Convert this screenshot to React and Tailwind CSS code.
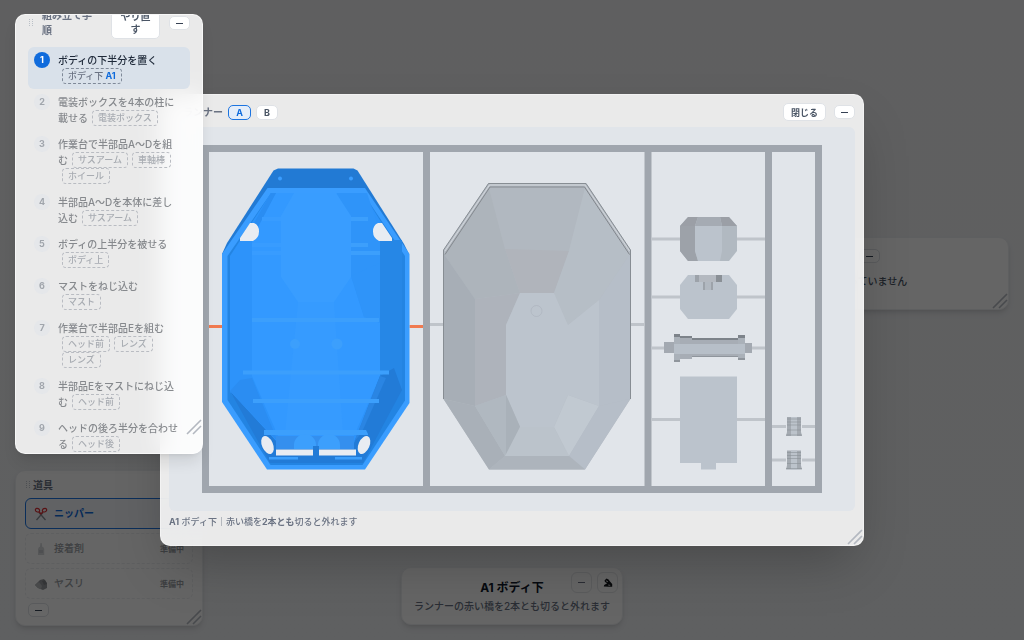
import clsx from "clsx";

const STEPS = [
  { text: "ボディの下半分を置く", parts: ["ボディ下"], code: "A1" },
  { text: "電装ボックスを4本の柱に載せる", parts: ["電装ボックス"] },
  { text: "作業台で半部品A〜Dを組む", parts: ["サスアーム", "車軸棒", "ホイール"] },
  { text: "半部品A〜Dを本体に差し込む", parts: ["サスアーム"] },
  { text: "ボディの上半分を被せる", parts: ["ボディ上"] },
  { text: "マストをねじ込む", parts: ["マスト"] },
  { text: "作業台で半部品Eを組む", parts: ["ヘッド前", "レンズ", "レンズ"] },
  { text: "半部品Eをマストにねじ込む", parts: ["ヘッド前"] },
  { text: "ヘッドの後ろ半分を合わせる", parts: ["ヘッド後"] },
];

const Grip = () => (
  <svg width="6" height="8" viewBox="0 0 6 8" fill="#9aa3af" className="shrink-0 opacity-60">
    {[0, 2, 4, 6].map((y) => (
      <g key={y}>
        <rect x="1" y={y} width="1" height="1" />
        <rect x="4" y={y} width="1" height="1" />
      </g>
    ))}
  </svg>
);

const ResizeHandle = ({ className }) => (
  <svg
    width="16"
    height="16"
    viewBox="0 0 16 16"
    stroke="#b3b8c0"
    strokeWidth="1.6"
    className={clsx("absolute", className)}
  >
    <path d="M1 15 15 1M7 15l8-8" />
  </svg>
);

const MinButton = ({ className }) => (
  <button
    type="button"
    aria-label="最小化"
    className={clsx(
      "flex h-3.5 w-[21px] shrink-0 items-center justify-center rounded-[5px] border border-[#dfe2e6] bg-white",
      className,
    )}
  >
    <span className="h-px w-[7px] bg-gray-700" />
  </button>
);

const StepItem = ({ step, index }) => {
  const current = index === 0;
  return (
    <li
      className={clsx(
        "flex gap-2 rounded-md pt-[5px] pr-2.5 pb-[5px] pl-1.5",
        current && "bg-[#d9e1ea]",
      )}
    >
      <span
        className={clsx(
          "flex h-4 w-4 shrink-0 items-center justify-center rounded-full text-[9px] font-bold",
          current ? "bg-[#0f6bdc] text-white" : "bg-[#e1e5ea]/60 text-[#a0a5ac]",
        )}
      >
        {index + 1}
      </span>
      <p
        className={clsx(
          "min-w-0 flex-1 text-[10px] leading-4 font-medium break-all",
          current ? "text-gray-800" : "text-[#86898d]",
        )}
      >
        {step.text}
        {step.parts.map((part, i) => (
          <span
            key={i}
            className={clsx(
              "ml-1 inline-block h-4 rounded border border-dashed px-[5px] align-top text-[9px] leading-[14px] whitespace-nowrap",
              current ? "border-[#7f8998] text-gray-500" : "border-[#b9bcc2] text-[#a8acb2]",
            )}
          >
            {part}
            {step.code && <b className="ml-0.5 text-[#0f6bdc]">{step.code}</b>}
          </span>
        ))}
      </p>
    </li>
  );
};

const StepsPanel = () => (
  <section className="absolute top-3.5 left-[15px] h-[440px] w-[188px] overflow-hidden rounded-[10px] border border-white/60 bg-white/87 px-3 shadow-lg backdrop-blur-md">
    <header className="-mt-2 mb-2 flex items-center">
      <Grip />
      <h2 className="ml-2 w-[51px] text-[10px] leading-[15px] font-bold text-gray-500">
        組み立て手順
      </h2>
      <button
        type="button"
        className="ml-[18px] h-8 w-[49px] rounded-[5px] border border-[#dfe2e6] bg-white px-2 text-[10px] leading-[13px] font-bold text-gray-600"
      >
        やり直す
      </button>
      <MinButton className="ml-auto" />
    </header>
    <ol>
      {STEPS.map((step, i) => (
        <StepItem key={i} step={step} index={i} />
      ))}
    </ol>
    <ResizeHandle className="right-0 bottom-[18px]" />
  </section>
);

const ScissorsIcon = () => (
  <svg width="14" height="14" viewBox="0 0 14 14" fill="none">
    <path d="M5 5.500 11.500 13M9 5.500 2.500 13" stroke="#8b9199" strokeWidth="1.3" />
    <ellipse cx="3.500" cy="3.200" rx="2.200" ry="1.700" transform="rotate(25 3.500 3.200)" stroke="#dc2f35" strokeWidth="1.200" />
    <ellipse cx="10.500" cy="3.200" rx="2.200" ry="1.700" transform="rotate(-25 10.500 3.200)" stroke="#dc2f35" strokeWidth="1.200" />
    <path d="M5 4.600 7 7l2-2.400" stroke="#dc2f35" strokeWidth="1.200" />
  </svg>
);

const GlueIcon = () => (
  <svg width="14" height="14" viewBox="0 0 14 14" fill="#d5d7da">
    <path d="M6.500 1h1.200l.6 4H5.900zM5 5h4.200l1 2v6H4V7z" />
    <path d="M5 8h4v3H5z" fill="#c3c6ca" />
  </svg>
);

const FileIcon = () => (
  <svg width="14" height="14" viewBox="0 0 14 14">
    <path d="M1 8 6 3l4-1 3 4v5l-4 2-5-2z" fill="#97999d" />
    <path d="m1 8 4-3 3 4-1 3-3-1z" fill="#b3b6ba" />
    <path d="m8 4 3-1 2 4-3 1z" fill="#808387" />
  </svg>
);

const TOOLS = [
  { name: "ニッパー", icon: <ScissorsIcon />, ready: true },
  { name: "接着剤", icon: <GlueIcon /> },
  { name: "ヤスリ", icon: <FileIcon /> },
];

const ToolsPanel = () => (
  <section className="absolute top-[470px] left-[15px] w-[188px] rounded-[10px] border border-[#eceef1] bg-[#fcfcfc] px-[9px] pt-[7px] pb-2 shadow-md">
    <header className="mb-1.5 flex items-center gap-0.5">
      <Grip />
      <h2 className="text-[10px] leading-[14px] font-bold text-gray-500">道具</h2>
    </header>
    <div className="flex flex-col gap-1">
      {TOOLS.map((tool) => (
        <button
          key={tool.name}
          type="button"
          disabled={!tool.ready}
          className={clsx(
            "flex h-[31px] items-center rounded-md border px-2 text-left text-[10px]",
            tool.ready
              ? "border-[#1c74e0] bg-[#f3f6fb] font-bold text-[#0f6bdc]"
              : "border-dashed border-[#ebedf0] font-medium text-[#9a9ea4]",
          )}
        >
          {tool.icon}
          <span className="ml-1.5">{tool.name}</span>
          {!tool.ready && <span className="ml-auto text-[8px] font-bold">準備中</span>}
        </button>
      ))}
    </div>
    <MinButton className="mt-1 ml-[3px]" />
    <ResizeHandle className="right-0 bottom-0" />
  </section>
);

const HoldingPanel = () => (
  <section className="absolute top-[237px] right-[15px] h-[73px] w-[200px] rounded-[10px] border border-[#eceef1] bg-[#fcfcfc] px-2 pt-[11px] shadow-md">
    <MinButton className="ml-[41px]" />
    <p className="mt-2.5 text-[10px] leading-4 font-medium text-gray-600">何も持っていません</p>
    <ResizeHandle className="right-0 bottom-0" />
  </section>
);

const Toast = () => (
  <section className="absolute bottom-[15px] left-1/2 w-[222px] -translate-x-1/2 rounded-[10px] border border-[#eceef1] bg-[#fcfcfc] py-2.5 text-center shadow-md">
    <h2 className="text-xs leading-5 font-bold text-gray-900">A1 ボディ下</h2>
    <p className="text-[10px] leading-4 font-medium text-gray-500">
      ランナーの赤い橋を2本とも切ると外れます
    </p>
    <div className="absolute top-1 right-1 flex gap-[5px]">
      <button
        type="button"
        aria-label="最小化"
        className="flex h-[21px] w-[21px] items-center justify-center rounded-md border border-[#e3e5e8]"
      >
        <span className="h-px w-[7px] bg-gray-500" />
      </button>
      <button
        type="button"
        aria-label="切り離す"
        className="flex h-[21px] w-[21px] items-center justify-center rounded-md border border-[#e3e5e8]"
      >
        <svg width="10" height="10" viewBox="0 0 10 10" fill="#15181c">
          <path d="M1.500 2.500 3.500.6l2 .8L7 3.500 9.200 6v2.800H6L.8 8.600 1.200 7l3-1.800L2 4z" />
          <path d="m3 2.800 2 1M5.200 7l2 .4" stroke="#f4f5f6" strokeWidth=".8" />
        </svg>
      </button>
    </div>
  </section>
);

const LowerBody = () => (
  <g>
    <path d="M278 168.500h75.500l4 2L404 244l5 10v55H222v-55l5-11 46.500-72.500z" fill="#227ad4" />
    <path d="M267.500 188H365l44.500 66v149L365 469.500h-98L222 402V254z" fill="#3a9dff" />
    <path d="M271 193h92l42 63v144.500l-42.500 64.500h-92L227.500 400V256z" fill="#2384e2" />
    <path d="M271 193h92l38 61v137l-39 57h-90l-42-56V256z" fill="#2d93fa" />
    <path d="M380 240h22v150l-22-14zM363 193l11 24-11-6-8-18z" fill="#2687e6" />
    <path d="M252 240v-8l24-39h78l26 47v136l-26 60h-76l-26-60z" fill="#3399ff" />
    <path d="M271 193h5l-20 38-10 6z" fill="#2a8df2" />
    <path d="m337 193 30 0 13 39v90l-16-5-13-41z" fill="#2f94f9" />
    <path d="m351 276 13 41 16 6v-60z" fill="#2f94f9" />
    <path d="M294 193h42l15 23v61l-17 25h-36l-17-25v-61z" fill="#399dff" />
    <path d="M298 302h36l9 131h-58z" fill="#369bff" />
    <path d="M402 390 363 463h-93l-40-72 48 52h76l26-67 14-8z" fill="#227bd7" />
    <path d="m380 376 6 2-24 54-8 10z" fill="#2a85e3" />
    <path d="m230 391 10-11 12-2 26 64z" fill="#2b8df2" />
    <g fill="#3c9ffc">
      <path d="M351 217h17v4h-17zM351 243h17v4h-17zM351 251h29v4h-29z" />
      <path d="M262 217h19v4h-19zM252 243h29v4h-29zM252 251h29v4h-29z" fill="#389cff" />
      <path d="M252 318h127v4H252zM243 370.500h146v4H243zM253 399h126v4H253z" />
      <path d="M264 430h102l2 4v1H264zM269 457h29v2.500h-29zM335 457h27v2.500h-27z" />
      <circle cx="295" cy="344" r="5" />
      <circle cx="337" cy="344" r="5.500" />
      <path d="M276 436h78v13h-78z" fill="#348fee" />
      <path d="M294 445a11 11 0 0 1 22 0v4h-22zM318 445a11 11 0 0 1 22 0v4h-22z" />
    </g>
    <circle cx="280" cy="178.500" r="2" fill="#3a9dff" />
    <circle cx="351" cy="178.500" r="2" fill="#3a9dff" />
    <g fill="#e8ecf2">
      <path d="m240 238 10-15h4q5 2 5 8.500t-6 9.500h-13zM392 238l-10-15h-4q-5 2-5 8.500t6 9.500h13z" />
      <path d="M276 449.500h37v6h-37zM319 449.500h37v6h-37z" />
      <ellipse cx="267.500" cy="445" rx="5.500" ry="9.500" transform="rotate(-24 267.500 445)" />
      <ellipse cx="364" cy="445" rx="5.500" ry="9.500" transform="rotate(24 364 445)" />
    </g>
    <path d="M313 446h6v15h-6z" fill="#227bd7" />
  </g>
);

const UpperBody = () => (
  <g>
    <path d="M488.500 183H586l44.500 67v149L585 469.500h-96L443.500 399V250z" fill="#b4bbc3" />
    <path d="M489 188h96l-16 62-15 43h-34l-15-44z" fill="#b1b8c0" />
    <path d="M489 188 444 254l31 45 45-6-15-44z" fill="#adb4bb" />
    <path d="M444 254l31 45v107l-31-7z" fill="#a7aeb6" />
    <path d="m475 299 45-6-14 32v70l-31 11z" fill="#aeb3bb" />
    <path d="m505 249 64 2-15 42h-34z" fill="#b0b4bb" />
    <path d="m585 188 45 66-31 46-31 25-14-32 15-42z" fill="#b6bec6" />
    <path d="m630 254-31 46v106l31-7z" fill="#b6bec8" />
    <path d="M520 293h34l14 32 31-25v106l-31-11-14 32h-34l-14-32v-70z" fill="#bcc4cd" />
    <path d="m443.500 399 31.500 7 30 50-16 13.500z" fill="#a9b0b8" />
    <path d="m475 406 31-11 14 32-15 29z" fill="#b0b8c0" />
    <path d="M506 395v61l14-29z" fill="#a9b1b9" />
    <path d="M520 427h34l15 29h-64z" fill="#bbc3cb" />
    <path d="m554 427 14-32 31 11-30 50z" fill="#c1c9d1" />
    <path d="m599 406 31-7-45 70.500-16-13.500z" fill="#b6bec8" />
    <path d="M505 456h64l16 13.500h-96z" fill="#adb4bc" />
    <path d="M443.500 399V250l45-66.500H586l44.500 66.500v149" fill="none" stroke="#878d93" strokeWidth="1" />
    <path d="m445 251 44.500-66H585l44.500 66" fill="none" stroke="#d2d6db" strokeWidth="1" />
    <path d="m445 254.500 45-67.500h94.500l45 67.500" fill="none" stroke="#83888e" strokeWidth="1" />
    <circle cx="536.500" cy="311" r="5.500" fill="none" stroke="#adb5be" strokeWidth=".7" />
  </g>
);

const SmallParts = () => (
  <g>
    <path d="M688 217h41l8 9v25l-8 10h-41l-8-10v-25z" fill="#b1b9c1" />
    <path d="M688 217h41l8 9h-57z" fill="#9b9fa6" />
    <path d="M680 226h15v25l3 10h-10l-8-10z" fill="#9da2a9" />
    <path d="M698 217h22l2 9v25l-2 10h-22l-3-10v-25z" fill="#bbc3cc" />
    <path d="M698 217h22l2 9h-27z" fill="#a5abb3" />

    <path d="M688 275h41l8 10v24l-8 10h-41l-8-10v-24z" fill="#bbc3cc" />
    <path d="M695 275h27v7h-27z" fill="#b4b9c0" />
    <path d="M695 275h4v7h-4zM703 282h10v8h-10z" fill="#9da3aa" />
    <path d="M716 275h6v7h-6z" fill="#8a9096" />
    <path d="M705 282h6v8h-6z" fill="#b2b9c1" />

    <path d="M664 342h10v11h-10zM745 343h7v10h-7z" fill="#a3a9b1" />
    <path d="M674 334h6v28h-6zM738 336h7v24h-7z" fill="#aab1b9" />
    <path d="M680 336h12v23h-12zM692 338h46v19h-46z" fill="#a7adb5" />
    <path d="M674 334h6v3h-6zM680 336h12v2h-12zM692 338h46v2h-46zM738 335h7v3h-7z" fill="#7d838a" />
    <path d="M674 344h71v10h-71z" fill="#b7bfc8" />
    <path d="M692 356h46v1h-46zM674 360h6v2h-6zM738 358h7v2h-7z" fill="#8f959c" />

    <path d="M680 376.500h57V463h-21v6.500h-15V463h-21z" fill="#bbc3cc" />

    {[417, 450.5].map((y) => (
      <g key={y}>
        <path d={`M787 ${y}h14v15l1 4h-16l1-4z`} fill="#a4aab1" />
        <path d={`M791 ${y}h6v19h-6z`} fill="#bcc3cb" />
        <path
          d={`M787 ${y + 2}h14M787 ${y + 5}h14M787 ${y + 8}h14M787 ${y + 13}h14M786 ${y + 18}h16`}
          stroke="#8a9097"
          strokeWidth=".6"
        />
      </g>
    ))}
  </g>
);

const RunnerCanvas = () => (
  <svg viewBox="169 127 686 384" className="block w-full rounded-md bg-[#e1e5ea]">
    <path
      d="M205.500 148.500h613v341h-613zM426.500 148v341M648 148v341M768.500 148v341"
      fill="none"
      stroke="#a0a6ae"
      strokeWidth="7"
    />
    <path
      d="M430 324.500h14M630 324.500h14.500M651.500 239H680M737 239h28M651.500 297H680M737 297h28M651.500 348H665M752 348h13M651.500 419.500H680M737 419.500h28M772 426.500h14M802 426.500h13M772 460h14M802 460h13"
      stroke="#bfc4ca"
      strokeWidth="3"
    />
    <path d="M209 326.500h13M409.500 326.500H423" stroke="#f07a50" strokeWidth="3" />
    <LowerBody />
    <UpperBody />
    <SmallParts />
  </svg>
);

const RunnerWindow = () => (
  <section className="absolute top-[94px] right-40 left-40 rounded-[10px] border border-white/40 bg-white/87 px-2 pt-2 pb-[15px] shadow-2xl backdrop-blur-md">
    <header className="mb-1.5 flex h-[18px] items-center">
      <Grip />
      <h2 className="ml-2 text-[10px] font-bold text-gray-500">ランナー</h2>
      <button
        type="button"
        className="ml-[5px] h-[15px] w-[23px] rounded-[5px] border border-[#1c74e0] bg-[#e4edf9] text-[9px] leading-none font-bold text-[#0f6bdc]"
      >
        A
      </button>
      <button
        type="button"
        className="ml-[5px] h-[15px] w-[22px] rounded-[5px] border border-[#dfe2e6] bg-white text-[9px] leading-none font-bold text-gray-600"
      >
        B
      </button>
      <button
        type="button"
        className="mr-2 ml-auto h-[18px] w-[43px] rounded-[5px] border border-[#dfe2e6] bg-white text-[9px] leading-none font-bold text-gray-600"
      >
        閉じる
      </button>
      <MinButton />
    </header>
    <RunnerCanvas />
    <p className="mt-[3px] text-[9px] leading-4 font-medium text-gray-500">
      <b>A1</b> ボディ下｜赤い橋を<b>2本とも</b>切ると外れます
    </p>
    <ResizeHandle className="right-0 bottom-0" />
  </section>
);

export default function App() {
  return (
    <main
      lang="ja"
      className="relative h-screen min-h-[640px] overflow-hidden bg-linear-to-b from-[#edeef0] to-[#edeff2] font-['Inter','Noto_Sans_CJK_JP',sans-serif]"
    >
      <ToolsPanel />
      <HoldingPanel />
      <Toast />
      <div className="absolute inset-0 bg-black/60" />
      <RunnerWindow />
      <StepsPanel />
    </main>
  );
}
